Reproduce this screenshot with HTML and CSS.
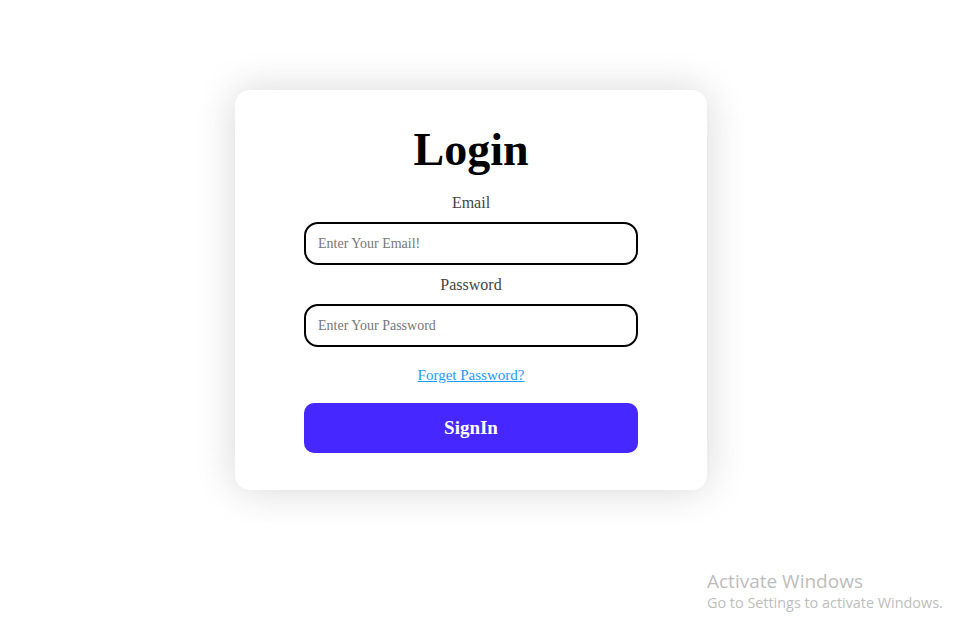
FILE: index.html
```html
<!DOCTYPE html>
<html lang="en">
<head>
    <meta charset="UTF-8">
    <meta name="viewport" content="width=device-width, initial-scale=1.0">
    <title>Login</title>
    <link rel="stylesheet" href="styles.css">
</head>
<body>
    <div class="page">
        <form class="login-card">
            <h1>Login</h1>

            <label for="email">Email</label>
            <input type="email" id="email" placeholder="Enter Your Email!">

            <label for="password">Password</label>
            <input type="password" id="password" placeholder="Enter Your Password">

            <a href="#" class="forget">Forget Password?</a>

            <button type="button" class="signin">SignIn</button>
        </form>
    </div>

    <div class="watermark">
        <div class="watermark-title">Activate Windows</div>
        <div class="watermark-sub">Go to Settings to activate Windows.</div>
    </div>
</body>
</html>
```

FILE: styles.css
```css
body {
    margin: 0;
    padding: 0;
    background-color: #ffffff;
    font-family: "Liberation Serif", Georgia, serif;
}

.page {
    display: flex;
    justify-content: center;
    align-items: flex-start;
    box-sizing: border-box;
    min-height: 100vh;
    padding-top: 90px;
    padding-right: 22px;
}

.login-card {
    width: 472px;
    box-sizing: border-box;
    padding: 32px 69px 37px;
    background-color: #fff;
    border-radius: 15px;
    box-shadow: 0 0 40px rgba(0, 0, 0, 0.16);
    display: flex;
    flex-direction: column;
    align-items: center;
}

h1 {
    margin: 0 0 15px;
    font-size: 46px;
    line-height: 56px;
    font-weight: bold;
    color: #000;
}

label {
    font-size: 16px;
    line-height: 19px;
    color: #444;
    margin-bottom: 10px;
}

input {
    width: 100%;
    height: 43px;
    box-sizing: border-box;
    border: 2px solid #000;
    border-radius: 14px;
    padding: 0 12px;
    font-family: "Liberation Serif", Georgia, serif;
    font-size: 14px;
    margin-bottom: 10px;
    outline: none;
}

input::placeholder {
    color: #777;
}

.forget {
    margin-top: 9px;
    font-size: 15px;
    line-height: 18px;
    color: #1a9bff;
}

.signin {
    margin-top: 19px;
    width: 100%;
    height: 50px;
    border: none;
    border-radius: 10px;
    background-color: #4727ff;
    color: #fff;
    font-family: "Liberation Serif", Georgia, serif;
    font-size: 19px;
    font-weight: bold;
    cursor: pointer;
}

.watermark {
    position: absolute;
    left: 707px;
    top: 569px;
    font-family: "Open Sans", "Noto Sans", sans-serif;
    color: #bdbdbd;
}

.watermark-title {
    font-size: 19px;
    line-height: 24px;
}

.watermark-sub {
    font-size: 14.4px;
    line-height: 20px;
}
```
